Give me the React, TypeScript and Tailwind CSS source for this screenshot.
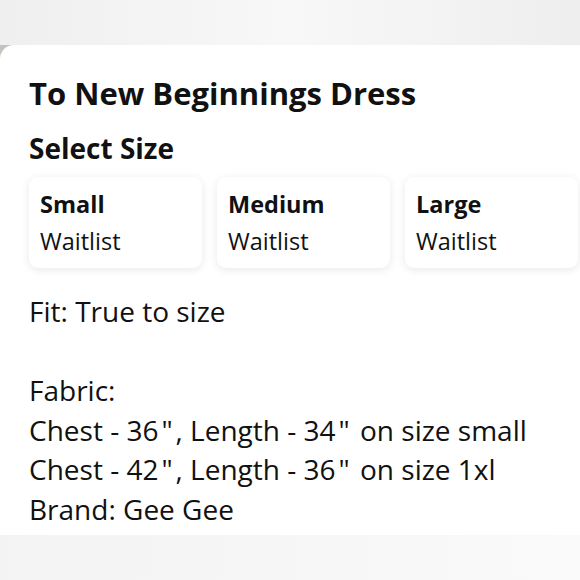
import React from 'react'

const sizes = ['Small', 'Medium', 'Large']

const font = { fontFamily: '"Open Sans", "Noto Sans", sans-serif' }

// the quote marks sit a little apart from the digits in the original
const Q = () => <span className="mx-[3px]">"</span>

export default function App() {
  return (
    <div className="w-[580px] h-[580px] overflow-hidden bg-[#c3c3bc] flex flex-col" style={font}>
      <div className="h-[45px] shrink-0 bg-gradient-to-r from-[#efefef] via-[#f8f8f8] to-[#eeeeee]" />
      <div className="flex-1 bg-white rounded-tl-[14px] flex flex-col">
        <div className="pl-[29px] pt-[28px] flex flex-col text-[#111]">
          <h1 className="text-[31px] leading-[40px] font-bold whitespace-nowrap">
            To New Beginnings Dress
          </h1>
          <h2 className="mt-[17px] text-[28px] leading-[36px] font-bold">Select Size</h2>
          <div className="mt-[11px] flex gap-[15px]">
            {sizes.map((s) => (
              <div
                key={s}
                className="w-[173px] shrink-0 h-[91px] rounded-[9px] bg-white shadow-[0_2px_10px_rgba(0,0,0,0.09)] pl-[11px] pt-[12px]"
              >
                <div className="text-[23.5px] leading-[30px] font-bold">{s}</div>
                <div className="mt-[8px] text-[23.5px] leading-[28px]">Waitlist</div>
              </div>
            ))}
          </div>
          <div className="mt-[24px] text-[28px] leading-[39.5px] whitespace-nowrap">
            <div>Fit: True to size</div>
            <div>&nbsp;</div>
            <div>Fabric:</div>
            <div>
              Chest - 36<Q />, Length - 34<Q /> on size small
            </div>
            <div>
              Chest - 42<Q />, Length - 36<Q /> on size 1xl
            </div>
            <div>Brand: Gee Gee</div>
          </div>
        </div>
        <div className="mt-auto h-[45px] bg-gradient-to-r from-[#f3f3f3] to-[#fafafa]" />
      </div>
    </div>
  )
}
